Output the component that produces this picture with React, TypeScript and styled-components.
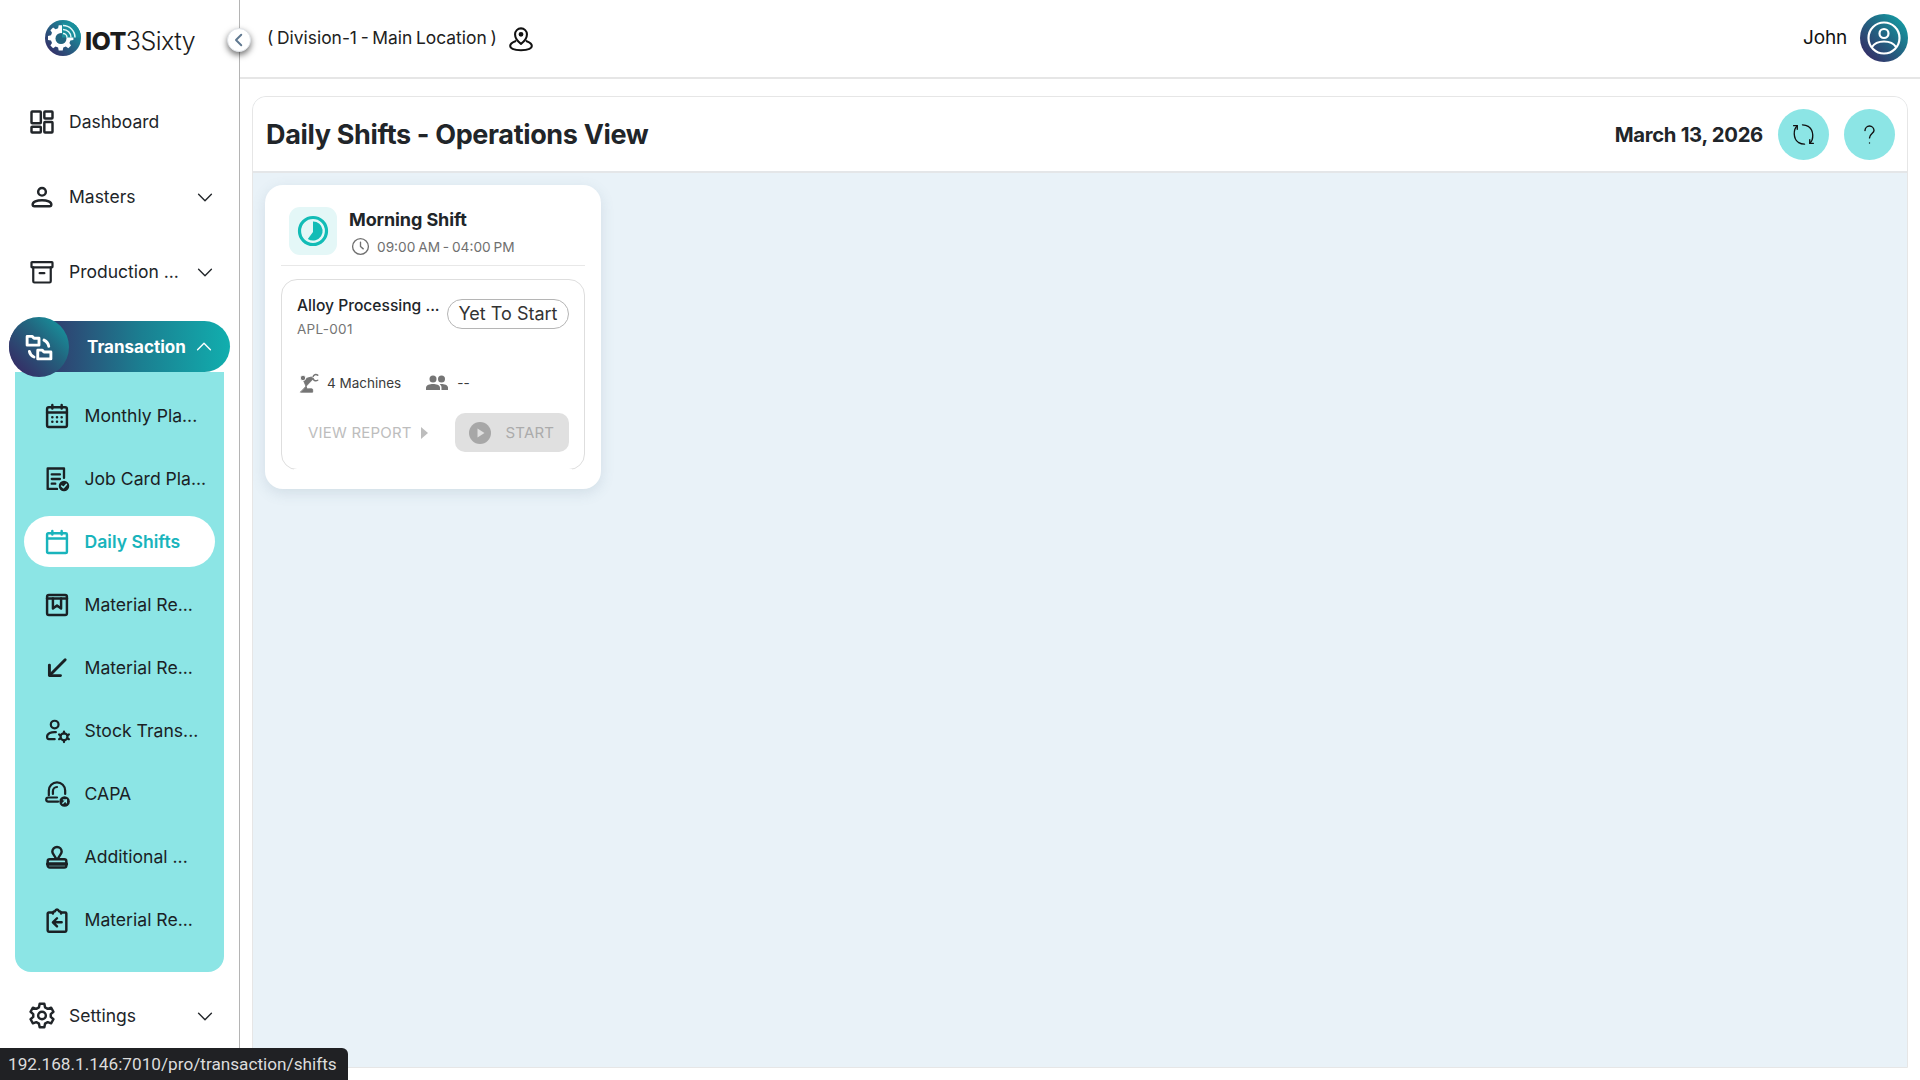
import React from "react";
import styled, { createGlobalStyle } from "styled-components";

const Global = createGlobalStyle`
  html, body { margin: 0; padding: 0; height: 100%; background: #fff; }
  body { font-family: Inter, "Liberation Sans", sans-serif; color: #212529; overflow: hidden; }
  #root { height: 100%; }
  * { box-sizing: border-box; }
`;

const Shell = styled.div`display: flex; width: 1920px; height: 1080px; position: relative; overflow: hidden;`;
const Sidebar = styled.aside`
  width: 240px; flex: none; height: 100%; border-right: 1px solid #b4b4b4; background: #fff;
  display: flex; flex-direction: column; position: relative; overflow: visible;
`;
const LogoBar = styled.div`height: 84px; flex: none; display: flex; align-items: flex-start; padding: 20px 0 0 45px; gap: 4px;`;
const LogoText = styled.div`font-size: 25px; line-height: 36px; margin-top: 3px; color: #1c1c1c; font-family: Inter, sans-serif; font-weight: 300; letter-spacing: -0.5px; white-space: nowrap;
  b { font-weight: 800; letter-spacing: -0.6px; }`;
const NavRow = styled.div`
  height: 75px; flex: none; display: flex; align-items: center; padding: 0 23px 0 28px; font-size: 17.5px; font-weight: 400; color: #212529;
`;
const NavIcon = styled.span<{ $color?: string }>`width: 28px; height: 28px; display: flex; align-items: center; justify-content: center; flex: none; margin-right: 13px; color: ${p => p.$color || "#212529"};`;
const NavLabel = styled.span`flex: 1; white-space: nowrap;`;
const Group = styled.div`margin-top: 12px; padding: 0 9px; flex: none;`;
const GroupPill = styled.div`
  height: 51px; width: 221px; border-radius: 26px; background: linear-gradient(90deg, #3a1f5f 0%, #1b7f91 60%, #11aeae 100%);
  display: flex; align-items: center; position: relative; z-index: 2; color: #fff; font-weight: 700; font-size: 17px; padding: 0 15px 0 78px;
`;
const GroupBubble = styled.div`
  position: absolute; left: 0; top: -4px; width: 60px; height: 60px; border-radius: 50%;
  background: linear-gradient(45deg, #3a1f5f 0%, #22657f 60%, #14a0a6 100%);
  display: flex; align-items: center; justify-content: center;
`;
const SubPanel = styled.div`
  margin: 0 6px; width: 209px; background: #8ce5e5; border-radius: 0 0 16px 16px; padding: 18px 9px 27px;
`;
const SubRow = styled.div<{ $active?: boolean }>`
  height: 51px; margin-bottom: 12px; border-radius: 26px; display: flex; align-items: center; padding-left: 19px; font-size: 17.6px; white-space: nowrap;
  background: ${p => (p.$active ? "#fff" : "transparent")}; color: ${p => (p.$active ? "#19b4bc" : "#1a2124")}; font-weight: ${p => (p.$active ? 600 : 400)};
  &:last-child { margin-bottom: 0; }
`;
const SubIcon = styled.span`width: 28px; height: 28px; flex: none; margin-right: 13.5px; display: flex; align-items: center; justify-content: center;`;
const SettingsRow = styled(NavRow)`margin-top: 6px;`;
const Collapse = styled.button`
  position: absolute; left: 227px; top: 28px; width: 24px; height: 24px; padding: 0; border: 1px solid #dfe3e8; border-radius: 50%; background: #fff;
  box-shadow: 0 3px 6px rgba(0,0,0,.55); display: flex; align-items: center; justify-content: center; z-index: 3; color: #5f7890;
`;
const Main = styled.main`flex: 1; min-width: 0; display: flex; flex-direction: column;`;
const TopBar = styled.header`
  height: 79px; flex: none; border-bottom: 2px solid #e6e6e6; display: flex; align-items: center; padding: 0 12px 2px 27px;
`;
const Location = styled.span`font-size: 17.4px; color: #212121; white-space: nowrap; margin-right: 11px; word-spacing: -1.2px;`;
const PinSlot = styled.span`display: flex; margin-top: 2px;`;
const Spacer = styled.span`flex: 1;`;
const UserName = styled.span`font-size: 19px; color: #111; margin-right: 13px; letter-spacing: -.2px;`;
const Avatar = styled.div`width: 48px; height: 48px; margin-top: 1px; border-radius: 50%; background: linear-gradient(45deg, #3a1f5f 0%, #1f6f88 60%, #11a9ab 100%); display: flex; align-items: center; justify-content: center;`;
const Body = styled.div`flex: 1; min-height: 0; padding: 17px 12px 12px;`;
const Panel = styled.section`
  height: 100%; border: 1px solid #e6e6e6; border-radius: 14px 14px 0 0; display: flex; flex-direction: column; overflow: hidden; background: #e9f2f8;
`;
const PanelHead = styled.div`
  height: 76px; flex: none; background: #fff; border-bottom: 2px solid #e4e6e8; display: flex; align-items: center; padding: 0 12px 0 13px;
`;
const Title = styled.h1`margin: 0; font-size: 27px; font-weight: 700; color: #212529; letter-spacing: -0.35px; white-space: nowrap;`;
const DateText = styled.span`font-size: 20.3px; font-weight: 700; color: #212529; letter-spacing: -0.3px; margin-right: 15px; padding-top: 1px;`;
const RoundBtn = styled.button`
  width: 51px; height: 51px; border: 0; padding: 0; border-radius: 50%; background: #8ce5e5; color: #111; display: flex; align-items: center; justify-content: center; margin-left: 15px;
  &:first-of-type { margin-left: 0; }
`;
const Content = styled.div`flex: 1; padding: 12px 0 0 12px;`;
const Card = styled.article`
  width: 336px; height: 304px; background: #fff; border-radius: 18px; box-shadow: 0 4px 14px rgba(90,120,140,.16); padding: 22px 16px 0;
`;
const CardHead = styled.div`display: flex; height: 59px; padding: 0 0 0 8px; border-bottom: 1px solid #e8e8e8; align-items: flex-start;`;
const Tile = styled.div`width: 48px; height: 48px; background: #e4f7f7; border-radius: 11px; display: flex; align-items: center; justify-content: center; margin-right: 12px; flex: none;`;
const ShiftName = styled.div`font-size: 18px; font-weight: 700; color: #212529; line-height: 24px; margin-top: 1px; letter-spacing: -0.1px;`;
const ShiftTime = styled.div`display: flex; align-items: center; gap: 7px; font-size: 13.7px; color: #707070; margin-top: 5px; margin-left: 2px; white-space: nowrap; word-spacing: -1px;`;
const Inner = styled.div`
  position: relative; margin-top: 13px; width: 304px; height: 191px; border: 1px solid #dedede; border-radius: 16px; padding: 14px 15px 0;
  &::after { content: ""; position: absolute; left: 12px; right: 12px; bottom: -1px; height: 1px; background: #fff; }
`;
const InnerTop = styled.div`display: flex; justify-content: space-between; align-items: flex-start;`;
const MachineName = styled.div`font-size: 15.6px; font-weight: 500; color: #212529; white-space: nowrap; line-height: 24px;`;
const MachineCode = styled.div`font-size: 13.5px; color: #757575; letter-spacing: .3px; line-height: 18px; margin-top: 2px;`;
const Status = styled.div`height: 30px; width: 122px; margin-top: 5px; border: 1px solid #b5b5b5; border-radius: 15px; font-size: 18px; line-height: 28px; text-align: center; color: #333; white-space: nowrap;`;
const Stats = styled.div`display: flex; align-items: center; margin-top: 32px; height: 26px; font-size: 13.5px; color: #3b3b3b;`;
const StatIcon = styled.span`width: 24px; height: 22px; display: flex; align-items: center; justify-content: center; margin-right: 6px; color: #757575;`;
const StatText = styled.span`margin-right: 24px; white-space: nowrap; & + span + span { margin-left: 2px; }`;
const Actions = styled.div`display: flex; align-items: center; justify-content: space-between; margin-top: 17px; padding-left: 11px;`;
const ViewReport = styled.span`display: flex; align-items: center; gap: 9px; font-size: 15px; color: #bdbdbd; letter-spacing: .2px; white-space: nowrap;`;
const StartBtn = styled.div`width: 114px; height: 39px; background: #e0e0e0; border-radius: 10px; display: flex; align-items: center; padding-left: 14px; gap: 14.5px; font-size: 15px; color: #ababab; letter-spacing: .2px;`;
const StatusBubble = styled.div`
  position: absolute; left: 0; bottom: 0; width: 348px; height: 32px; background: #202124; border-radius: 0 6px 0 0; color: #dcdcdc;
  font-family: Roboto, sans-serif; font-size: 17.2px; line-height: 33px; padding-left: 8px; z-index: 5; white-space: nowrap;
`;

const Svg: React.FC<React.PropsWithChildren<{ s?: number; w?: number; box?: number }>> = ({ s = 24, w = 2, box = 24, children }) => (
  <svg width={s} height={s} viewBox={`0 0 ${box} ${box}`} fill="none" stroke="currentColor" strokeWidth={w} strokeLinecap="round" strokeLinejoin="round">{children}</svg>
);
const DashIcon = () => <Svg s={28} w={2.1}><rect x="3" y="3" width="8" height="10" rx="0.6" /><rect x="14" y="3" width="7" height="6" rx="0.6" /><rect x="3" y="16" width="8" height="5" rx="0.6" /><rect x="14" y="12" width="7" height="9" rx="0.6" /></Svg>;
const PersonIcon = () => <Svg s={28} w={2.1}><circle cx="12" cy="7.5" r="3.3" /><path d="M4 18.5c0-2.2 3.4-3.700 8-3.700s8 1.500 8 3.700c0 1-.6 1.500-1.500 1.500h-13C4.600 20 4 19.500 4 18.500z" /></Svg>;
const ArchiveIcon = () => <Svg s={30} w={1.9}><rect x="3" y="3.500" width="18" height="4.500" rx="0.5" /><path d="M4.500 8v12a1 1 0 0 0 1 1h13a1 1 0 0 0 1-1V8" /><path d="M10 13h4" /></Svg>;
const TransIcon = () => (
  <svg width="30" height="30" viewBox="0 0 24 24" fill="none" stroke="#fff" strokeWidth="2.300" strokeLinecap="round" strokeLinejoin="round">
    <path d="M2.500 3.500h4l1.500 1.500h4v5.500h-9.500z" /><path d="M11 14.500h3.500l1.500 1.500h5.500v5.500H11z" />
    <path d="M16 6.500c2 1 3.500 3 3.800 5" /><path d="M8 20c-2-.8-3.300-2.500-3.700-4.500" />
  </svg>
);
const SettingsIcon = () => (
  <svg width="29" height="29" viewBox="0 0 24 24" fill="none" stroke="currentColor" strokeWidth="2.100" strokeLinejoin="round">
    <path d="M10 2h4l.6 3 2.300 1.300 2.900-1 2 3.500-2.300 2v2.400l2.300 2-2 3.500-2.900-1L14.600 19 14 22h-4l-.6-3-2.300-1.300-2.900 1-2-3.500 2.300-2v-2.400l-2.300-2 2-3.500 2.900 1L9.400 5z" />
    <circle cx="12" cy="12" r="3.300" />
  </svg>
);
const Chevron = ({ up }: { up?: boolean }) => <Svg s={22} w={1.5}><path d={up ? "M5 15l7-7 7 7" : "M5 9l7 7 7-7"} /></Svg>;
const CalMonth = () => <Svg s={28} w={2.1}><rect x="3.500" y="4.500" width="17" height="17" rx="1.500" /><path d="M8 2.500v3M16 2.500v3M3.500 9h17" /><path d="M8 13h.01M12 13h.01M16 13h.01M8 17h.01M12 17h.01M16 17h.01" strokeWidth="2.200" /></Svg>;
const JobCard = () => (
  <svg width="30" height="30" viewBox="0 0 24 24" fill="none" stroke="currentColor" strokeWidth="2" strokeLinecap="round" strokeLinejoin="round">
    <path d="M12 20.500H4V3h14v8" /><path d="M7.500 8h7M7.500 12h7M7.500 16h3" /><circle cx="18" cy="18" r="4.500" fill="currentColor" stroke="none" /><path d="M16 18l1.500 1.500 2.500-2.800" stroke="#8ce5e5" strokeWidth="1.400" />
  </svg>
);
const CalPlain = () => <Svg s={28} w={2.1}><rect x="3.500" y="4.500" width="17" height="17" rx="1" /><path d="M8 2.500v3M16 2.500v3M3.500 9h17" /></Svg>;
const BoxMark = () => <Svg s={28} w={2.1}><rect x="3.500" y="3.500" width="17" height="17" rx="1.500" /><path d="M3.500 6.500h17" /><path d="M8.500 6.500v8.500l3.500-2.500 3.500 2.500V6.500" /></Svg>;
const ArrowDL = () => <Svg s={28} w={2.500}><path d="M19 5L6 18" /><path d="M5.500 9.500V18.500H15" /></Svg>;
const UserCog = () => (
  <svg width="30" height="30" viewBox="0 0 24 24" fill="none" stroke="currentColor" strokeWidth="1.900" strokeLinecap="round" strokeLinejoin="round">
    <circle cx="10" cy="6.500" r="3.300" /><path d="M11 13c-4-.3-7.500 1-7.500 4 0 1.200.5 2 1.500 2h5" />
    <path d="M18 12.500v1.600M18 20v1.500M13.800 15l1.400.8M20.800 18.300l1.400.7M13.800 19l1.400-.7M20.800 15.700l1.400-.7" />
    <circle cx="18" cy="17" r="3" />
  </svg>
);
const Capa = () => (
  <svg width="30" height="30" viewBox="0 0 24 24" fill="none" stroke="currentColor" strokeWidth="1.900" strokeLinecap="round" strokeLinejoin="round">
    <path d="M8.500 12V9.500a3.500 3.500 0 0 1 3.500-3.500" /><path d="M5 13V9a7 7 0 0 1 14 0v3" /><path d="M13 18.500H4.500a1.700 1.700 0 0 1 0-3.500H12" />
    <circle cx="18.500" cy="18.500" r="4.500" fill="currentColor" stroke="none" /><path d="M17 20l3-3M17.500 17H20v2.500" stroke="#8ce5e5" strokeWidth="1.200" />
  </svg>
);
const Stamp = () => <Svg s={28} w={2.1}><path d="M12 3.500a4 4 0 0 0-4 4c0 2 2.500 3.500 3 6h2c.5-2.500 3-4 3-6a4 4 0 0 0-4-4z" /><rect x="4" y="14" width="16" height="7" rx="1.800" /><path d="M4 18h16" strokeWidth="3" /></Svg>;
const ClipBack = () => <Svg s={28} w={2.1}><path d="M8.500 5.500H5a1 1 0 0 0-1 1V21a1 1 0 0 0 1 1h14a1 1 0 0 0 1-1V6.500a1 1 0 0 0-1-1h-3.500" /><path d="M8.500 6.500c0-1.500 1-2 1.800-2 .300-1 1-1.500 1.700-1.500s1.400.5 1.700 1.500c.8 0 1.800.5 1.800 2" /><path d="M16 14H9M12 10.500L8.500 14l3.500 3.500" /></Svg>;
const PinIcon = () => (
  <svg width="26" height="26" viewBox="0 0 24 24" fill="none" stroke="#111" strokeWidth="1.900" strokeLinecap="round" strokeLinejoin="round">
    <path d="M12 16.500s-5.500-4-5.500-8.800a5.500 5.500 0 0 1 11 0c0 4.800-5.500 8.800-5.500 8.800z" /><circle cx="12" cy="7.700" r="1.300" fill="#111" />
    <path d="M6.800 14C4 15 2 16.500 2 18.500 2 20.800 6 22.300 12 22.300s10-1.500 10-3.800c0-2-2-3.500-4.800-4.500" />
  </svg>
);
const Logo = () => (
  <svg width="36" height="36" viewBox="0 0 36 36">
    <defs>
      <linearGradient id="lg" x1="0" y1="1" x2="1" y2="0"><stop offset="0" stopColor="#3a1f5f" /><stop offset="1" stopColor="#11a9ab" /></linearGradient>
      <clipPath id="lc"><circle cx="18" cy="18" r="18" /></clipPath>
    </defs>
    <circle cx="18" cy="18" r="18" fill="url(#lg)" />
    <path d="M15 7h4l.6 3 2.500 1 2.500-1.600 2.700 2.700L25.700 14.600l1 2.500 3 .6v4l-3 .6-1 2.500 1.600 2.500-2.700 2.700-2.500-1.600-2.500 1-.6 3h-4l-.6-3-2.500-1-2.500 1.600-2.700-2.700 1.600-2.500-1-2.500-3-.6v-4l3-.6 1-2.500-1.600-2.500 2.700-2.700 2.500 1.600 2.500-1z" fill="#fff" transform="translate(-1.300 -1.800)" />
    <circle cx="16" cy="18.500" r="5.500" fill="#22657f" />
    <g clipPath="url(#lc)">
      <path d="M17 3h19v14.500H17z" fill="#1a8f9c" />
      <path d="M18 5.500a12 12 0 0 1 12 12M18 9.500a8 8 0 0 1 8 8M18 13.500a4 4 0 0 1 4 4" stroke="#e4f8f8" strokeWidth="1.500" fill="none" />
    </g>
  </svg>
);
const AvatarIcon = () => (
  <svg width="36" height="36" viewBox="0 0 36 36" fill="none" stroke="#fff" strokeWidth="2.200">
    <circle cx="18" cy="18" r="15.500" /><circle cx="18" cy="13.500" r="4.500" /><path d="M6 27c2.500-4 7-5.500 12-5.500S27.500 23 30 27" />
  </svg>
);
const SyncIcon = () => (
  <Svg s={25} w={1.300}>
    <path d="M6 3.500C2 7 2 16 7 19.500c2 1.300 4 1.800 6 1.800" /><path d="M2.500 3.500H6V7" />
    <path d="M18 20.500C22 17 22 8 17 4.500c-2-1.300-4-1.800-6-1.800" /><path d="M21.500 20.500H18V17" />
  </Svg>
);
const HelpIcon = () => <Svg s={27} w={1.250}><path d="M8 8.500a4 4 0 0 1 8 0c0 2.500-4 3-4 6.500" /><path d="M12 19.500h.01" /></Svg>;
const ShiftDial = () => (
  <svg width="32" height="32" viewBox="0 0 32 32">
    <circle cx="16" cy="16" r="13.500" fill="none" stroke="#12bcb6" strokeWidth="3.200" />
    <path d="M16 6.500a9.500 9.500 0 0 1 2.500 18.700 9.500 9.500 0 0 1-7.700-1.300L16 17z" fill="#12bcb6" />
  </svg>
);
const ClockIcon = () => <Svg s={19} w={1.700}><circle cx="12" cy="12" r="10" /><path d="M12 6.500V12l3.500 3" /></Svg>;
const RobotArm = () => (
  <svg width="22" height="22" viewBox="0 0 24 24" fill="none" stroke="currentColor" strokeLinecap="round">
    <path d="M3 22h13v-2.600a1 1 0 0 0-1-1H12L10 18.500 5.500 8l9-2.500 2 1.500z" fill="currentColor" strokeWidth="1" strokeLinejoin="round" />
    <circle cx="5.500" cy="6.500" r="3" fill="currentColor" stroke="#fff" strokeWidth="1" />
    <path d="M21.500 3.500c-2-1.500-4.500-.5-5 1.500M21.500 9c-2 1.300-4 .5-5-1.500" strokeWidth="1.600" />
  </svg>
);
const PeopleIcon = () => (
  <svg width="24" height="24" viewBox="0 0 24 24" fill="currentColor">
    <circle cx="8" cy="8" r="3.500" /><circle cx="16.500" cy="8" r="3.500" /><path d="M1 19v-2.500C1 14 5 13 8 13s7 1 7 3.500V19z" /><path d="M16.500 19v-2.500c0-1.300-.6-2.400-1.800-3.300.7-.1 1.300-.2 1.800-.2 2.500 0 6.500 1 6.500 3.500V19z" />
  </svg>
);
const PlayDisc = () => (
  <svg width="22" height="22" viewBox="0 0 22 22"><circle cx="11" cy="11" r="11" fill="#a7a7a7" /><path d="M8.500 6.500l7 4.500-7 4.500z" fill="#e0e0e0" /></svg>
);
const Caret = () => <svg width="7" height="12" viewBox="0 0 7 12"><path d="M0 0l7 6-7 6z" fill="#bdbdbd" /></svg>;

const subItems: { label: string; icon: React.ReactNode; active?: boolean }[] = [
  { label: "Monthly Pla...", icon: <CalMonth /> },
  { label: "Job Card Pla...", icon: <JobCard /> },
  { label: "Daily Shifts", icon: <CalPlain />, active: true },
  { label: "Material Re...", icon: <BoxMark /> },
  { label: "Material Re...", icon: <ArrowDL /> },
  { label: "Stock Trans...", icon: <UserCog /> },
  { label: "CAPA", icon: <Capa /> },
  { label: "Additional ...", icon: <Stamp /> },
  { label: "Material Re...", icon: <ClipBack /> },
];

export default function App() {
  return (
    <Shell>
      <Global />
      <Sidebar>
        <LogoBar><Logo /><LogoText><b>IOT</b>3Sixty</LogoText></LogoBar>
        <NavRow><NavIcon><DashIcon /></NavIcon><NavLabel>Dashboard</NavLabel></NavRow>
        <NavRow><NavIcon><PersonIcon /></NavIcon><NavLabel>Masters</NavLabel><Chevron /></NavRow>
        <NavRow><NavIcon><ArchiveIcon /></NavIcon><NavLabel>Production ...</NavLabel><Chevron /></NavRow>
        <Group>
          <GroupPill><GroupBubble><TransIcon /></GroupBubble><NavLabel>Transaction</NavLabel><Chevron up /></GroupPill>
          <SubPanel>
            {subItems.map((it, i) => (
              <SubRow key={i} $active={it.active}><SubIcon>{it.icon}</SubIcon>{it.label}</SubRow>
            ))}
          </SubPanel>
        </Group>
        <SettingsRow><NavIcon><SettingsIcon /></NavIcon><NavLabel>Settings</NavLabel><Chevron /></SettingsRow>
        <Collapse aria-label="collapse"><Svg s={18} w={2.600}><path d="M15 5l-7 7 7 7" /></Svg></Collapse>
      </Sidebar>
      <Main>
        <TopBar>
          <Location>( Division-1 - Main Location )</Location><PinSlot><PinIcon /></PinSlot><Spacer />
          <UserName>John</UserName><Avatar><AvatarIcon /></Avatar>
        </TopBar>
        <Body>
          <Panel>
            <PanelHead>
              <Title>Daily Shifts - Operations View</Title><Spacer />
              <DateText>March 13, 2026</DateText>
              <RoundBtn aria-label="refresh"><SyncIcon /></RoundBtn>
              <RoundBtn aria-label="help"><HelpIcon /></RoundBtn>
            </PanelHead>
            <Content>
              <Card>
                <CardHead>
                  <Tile><ShiftDial /></Tile>
                  <div>
                    <ShiftName>Morning Shift</ShiftName>
                    <ShiftTime><ClockIcon />09:00 AM - 04:00 PM</ShiftTime>
                  </div>
                </CardHead>
                <Inner>
                  <InnerTop>
                    <div><MachineName>Alloy Processing ...</MachineName><MachineCode>APL-001</MachineCode></div>
                    <Status>Yet To Start</Status>
                  </InnerTop>
                  <Stats>
                    <StatIcon><RobotArm /></StatIcon><StatText>4 Machines</StatText>
                    <StatIcon><PeopleIcon /></StatIcon><StatText>--</StatText>
                  </Stats>
                  <Actions>
                    <ViewReport>VIEW REPORT <Caret /></ViewReport>
                    <StartBtn><PlayDisc />START</StartBtn>
                  </Actions>
                </Inner>
              </Card>
            </Content>
          </Panel>
        </Body>
      </Main>
      <StatusBubble>192.168.1.146:7010/pro/transaction/shifts</StatusBubble>
    </Shell>
  );
}
